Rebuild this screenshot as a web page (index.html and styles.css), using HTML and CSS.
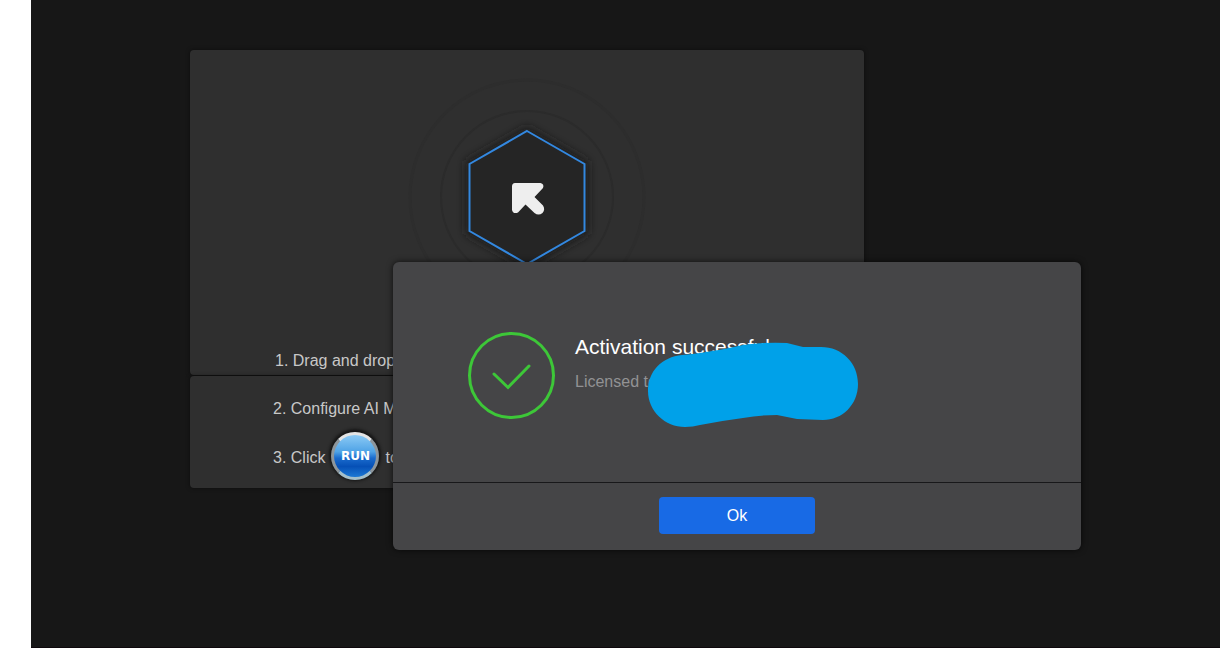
FILE: index.html
```html
<!DOCTYPE html>
<html lang="en">
<head>
    <meta charset="UTF-8">
    <meta name="viewport" content="width=device-width, initial-scale=1.0">
    <title>Activation</title>
    <link rel="stylesheet" href="styles.css">
</head>
<body>
    <div class="app">
        <main class="workspace">
            <section class="panel drop-panel">
                <svg class="drop-icon" width="240" height="240" viewBox="0 0 240 240" aria-hidden="true">
                    <defs>
                        <filter id="hexShadow" x="-20%" y="-20%" width="140%" height="140%">
                            <feGaussianBlur stdDeviation="5"/>
                        </filter>
                    </defs>
                    <circle class="ring ring-outer" cx="120" cy="120" r="117"/>
                    <circle class="ring" cx="120" cy="120" r="86"/>
                    <path class="hex-shadow" filter="url(#hexShadow)" d="M120 50 L181 85 V156 L120 191 L59 156 V85 Z"/>
                    <path class="hex" d="M120 54 L177.500 87 V154 L120 187 L62.500 154 V87 Z"/>
                    <path class="arrow" d="M108 106 H133.500 Q137.500 107 136 111 L127.500 120 L136 128.500 Q138.500 132.500 135.500 136 Q131.500 139 127.500 136 L118.500 127.500 L111 135.500 Q106 137.500 105 133 V109.500 Q105 106 108 106 Z"/>
                </svg>
                <p class="step">1. Drag and drop</p>
            </section>
            <section class="panel steps-panel">
                <p class="step">2. Configure AI M</p>
                <div class="step run-step">
                    <span>3. Click</span>
                    <button type="button" class="run-btn">RUN</button>
                    <span>to</span>
                </div>
            </section>
        </main>

        <div class="dialog" role="dialog" aria-labelledby="dialogTitle">
            <div class="dialog-body">
                <svg class="check" width="87" height="88" viewBox="0 0 87 88" aria-hidden="true">
                    <circle cx="43.500" cy="43.500" r="42"/>
                    <path d="M26 42 L40 55.500 L61 34"/>
                </svg>
                <div class="message">
                    <h1 id="dialogTitle">Activation successful</h1>
                    <p>Licensed to</p>
                </div>
                <svg class="marker" width="210" height="86" viewBox="0 0 210 86" aria-hidden="true">
                    <path d="M0 49 C0 29 14 15 34 13 C56 11 77 7 95 3 Q115 0 139 1 L155 5 H173 C194 5 210 21 210 42 C210 63 194 78 175 78 L149 77 L129 73 Q112 73 95 76 Q72 79 52 83 Q45 85 37 85 C17 85 0 69 0 49 Z"/>
                </svg>
            </div>
            <div class="dialog-footer">
                <button type="button" class="ok-btn">Ok</button>
            </div>
        </div>
    </div>
</body>
</html>
```

FILE: styles.css
```css
* {
    box-sizing: border-box;
}
body {
    margin: 0;
    background: #fff;
    font-family: "Liberation Sans", Arial, sans-serif;
    font-size: 16px;
    line-height: 20px;
}
h1, p {
    margin: 0;
}
button {
    border: none;
    padding: 0;
    cursor: pointer;
}
.app {
    position: relative;
    min-height: calc(100vh - 3px);
    margin: 0 0 3px 31px;
    background: #171717;
    border-bottom: 1px solid #0e080c;
}

/* Start screen */
.workspace {
    max-width: 833px;
    padding: 50px 0 0 159px;
}
.panel {
    background: #2f2f2f;
    border-radius: 4px;
    box-shadow: 0 0 4px rgba(0, 0, 0, 0.5);
    color: #c8c8c8;
}
.drop-panel {
    display: flex;
    flex-direction: column;
    gap: 34px;
    padding: 27px 0 4px 85px;
    margin-bottom: 1px;
}
.drop-icon {
    align-self: center;
    margin-right: 85px;
}
.ring {
    fill: none;
    stroke: #2b2b2b;
    stroke-width: 2;
}
.ring-outer {
    stroke: #2d2d2d;
    stroke-width: 3;
}
.hex-shadow {
    fill: #1c1c1c;
}
.hex {
    fill: #252525;
    stroke: #3388e0;
    stroke-width: 2;
}
.arrow {
    fill: #eee;
}
.steps-panel {
    padding: 23px 0 8px 83px;
}
.run-step {
    display: flex;
    align-items: center;
    gap: 6px;
    margin-top: 13px;
}
.run-step span {
    padding-top: 4px;
}
.run-btn {
    width: 48px;
    height: 48px;
    border: 3px solid;
    border-color: #e4e4e4 #8d969c #a4bfca;
    border-radius: 50%;
    background: linear-gradient(#8ccaf5, #4fa3e6 40%, #1a6bcd 55%, #0650b6 75%, #1c78d4);
    box-shadow: 0 -1px 3px 2px #151515;
    color: #fff;
    font: bold 12px "DejaVu Sans", sans-serif;
}

/* Activation dialog */
.dialog {
    position: absolute;
    top: 262px;
    left: 362px;
    width: 688px;
    border-radius: 6px;
    background: #454547;
    box-shadow: 0 0 6px rgba(0, 0, 0, 0.7);
}
.dialog-body {
    position: relative;
    display: flex;
    gap: 20px;
    padding: 70px 75px 62px;
}
.check {
    fill: none;
    stroke: #3dc738;
    stroke-width: 3;
    stroke-linecap: round;
}
.message h1 {
    margin-top: 3px;
    color: #fff;
    font-size: 21px;
    font-weight: normal;
    line-height: 24px;
}
.message p {
    margin-top: 13px;
    color: #929294;
}
.marker {
    position: absolute;
    top: 80px;
    left: 255px;
    fill: #00a1e9;
}
.dialog-footer {
    display: flex;
    justify-content: center;
    padding: 14px 0 16px;
    border-top: 1px solid #18181a;
}
.ok-btn {
    width: 156px;
    height: 37px;
    border-radius: 4px;
    background: #186ae5;
    color: #fff;
    font: inherit;
}
```
